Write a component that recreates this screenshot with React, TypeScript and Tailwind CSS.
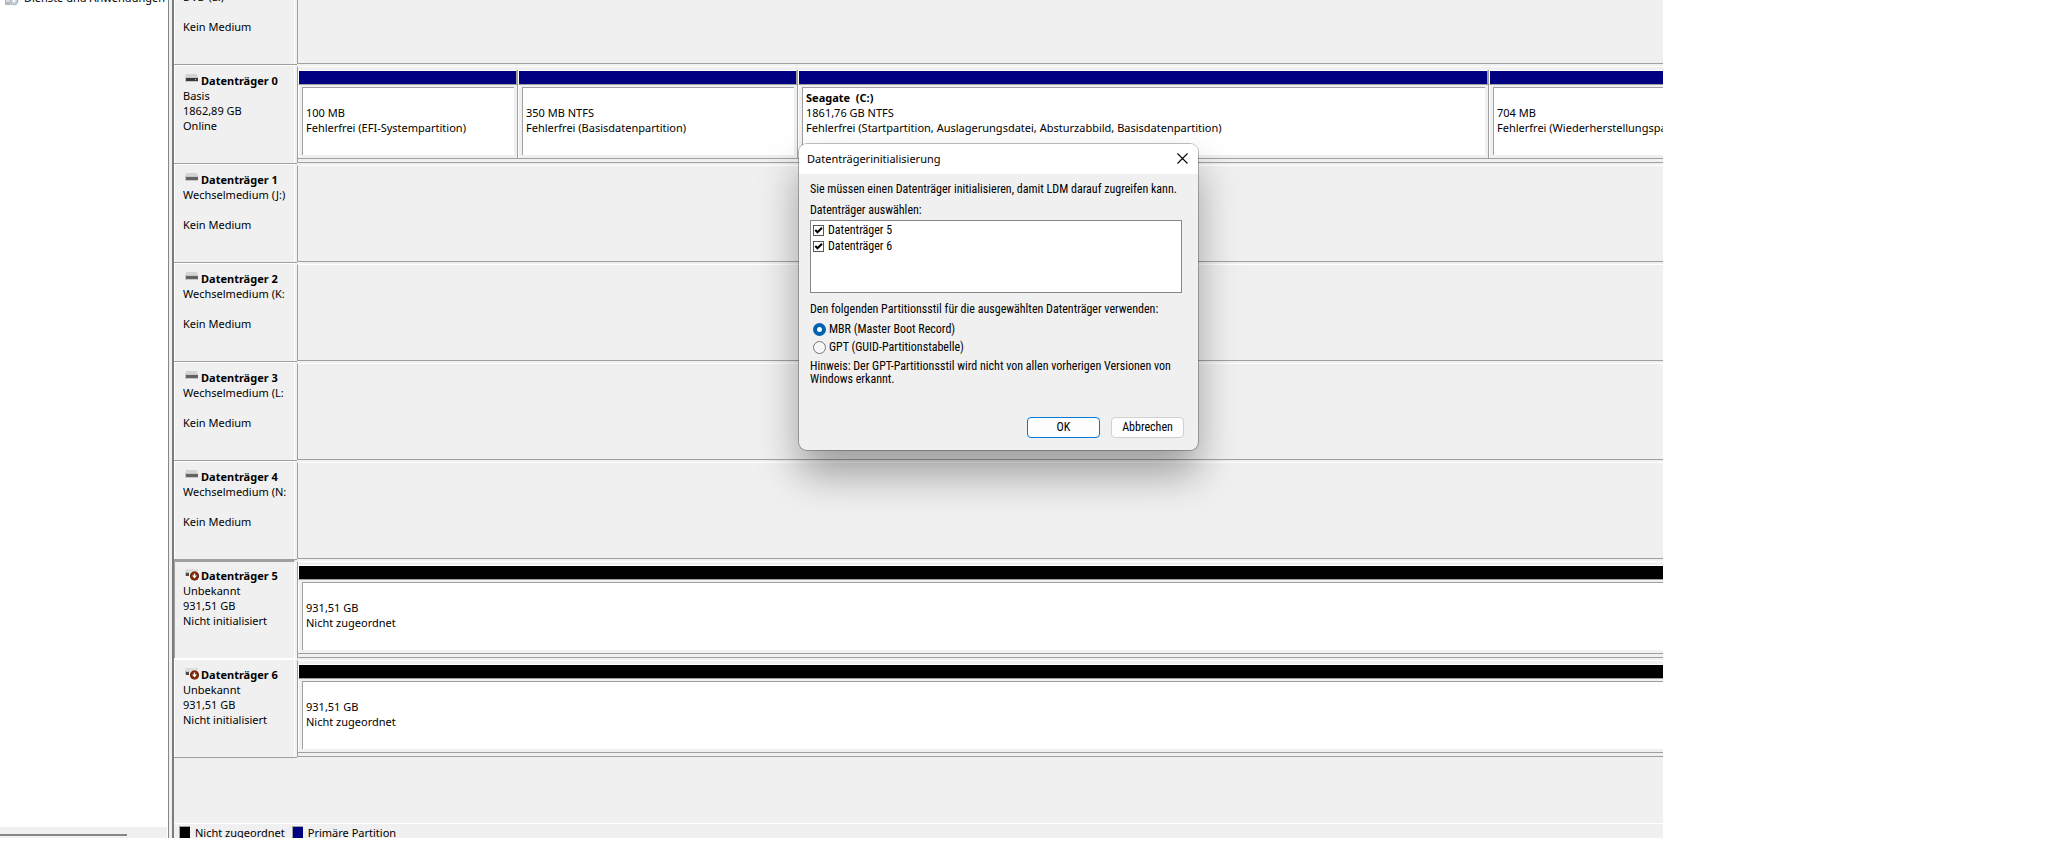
import React, { useState } from 'react';

interface Volume {
    name?: string;
    size: string;
    status: string;
    width: string;
    kind: 'primary' | 'unallocated';
}

interface Disk {
    id: string;
    title: string;
    lines: string[];
    icon: 'none' | 'basic' | 'removable' | 'unknown';
    selected?: boolean;
    volumes: Volume[];
}

// the last volume of a disk runs on past the right edge of the pane
const unallocated: Volume[] = [{ size: '931,51 GB', status: 'Nicht zugeordnet', width: 'flex-1 -mr-2', kind: 'unallocated' }];

const disks: Disk[] = [
    { id: 'dvd', title: '', lines: ['DVD (E:)', '', 'Kein Medium'], icon: 'none', volumes: [] },
    {
        id: 'd0',
        title: 'Datenträger 0',
        lines: ['Basis', '1862,89 GB', 'Online'],
        icon: 'basic',
        volumes: [
            { size: '100 MB', status: 'Fehlerfrei (EFI-Systempartition)', width: 'w-[220px] shrink-0', kind: 'primary' },
            { size: '350 MB NTFS', status: 'Fehlerfrei (Basisdatenpartition)', width: 'w-[280px] shrink-0', kind: 'primary' },
            { name: 'Seagate  (C:)', size: '1861,76 GB NTFS', status: 'Fehlerfrei (Startpartition, Auslagerungsdatei, Absturzabbild, Basisdatenpartition)', width: 'w-[691px] shrink-0', kind: 'primary' },
            { size: '704 MB', status: 'Fehlerfrei (Wiederherstellungspartition)', width: 'flex-1 -mr-2', kind: 'primary' },
        ],
    },
    { id: 'd1', title: 'Datenträger 1', lines: ['Wechselmedium (J:)', '', 'Kein Medium'], icon: 'removable', volumes: [] },
    { id: 'd2', title: 'Datenträger 2', lines: ['Wechselmedium (K:', '', 'Kein Medium'], icon: 'removable', volumes: [] },
    { id: 'd3', title: 'Datenträger 3', lines: ['Wechselmedium (L:', '', 'Kein Medium'], icon: 'removable', volumes: [] },
    { id: 'd4', title: 'Datenträger 4', lines: ['Wechselmedium (N:', '', 'Kein Medium'], icon: 'removable', volumes: [] },
    { id: 'd5', title: 'Datenträger 5', lines: ['Unbekannt', '931,51 GB', 'Nicht initialisiert'], icon: 'unknown', selected: true, volumes: unallocated },
    { id: 'd6', title: 'Datenträger 6', lines: ['Unbekannt', '931,51 GB', 'Nicht initialisiert'], icon: 'unknown', volumes: unallocated },
];

function DiskIcon({ icon }: { icon: Disk['icon'] }) {
    if (icon === 'none') return null;
    if (icon === 'unknown') {
        return (
            <svg width="16" height="15" viewBox="0 0 16 15" className="shrink-0" aria-hidden="true">
                <path d="M2 1h12v4H1V3z" fill="#dcdcdc" />
                <rect x="1" y="4" width="4" height="4" fill="#c4c4c4" />
                <rect x="2" y="5" width="3" height="3" fill="#4a4a4a" />
                <circle cx="10.5" cy="8" r="5.5" fill="#fff" />
                <circle cx="10.5" cy="8" r="4.7" fill="#7c2a0c" />
                <path d="M9.800 5.500h1.400v2h1.800L10.500 10.500 8 7.500h1.800z" fill="#fff" />
            </svg>
        );
    }
    const bar = icon === 'basic' ? '#3c3838' : '#636363';
    return (
        <svg width="16" height="15" viewBox="0 0 16 15" className="shrink-0" aria-hidden="true">
            <path d="M2 1h11l1 4H1z" fill="#d4d4d4" />
            <rect x="1" y="4" width="13" height="5" fill="#c8c8c8" />
            <rect x="2" y="5" width="12" height="3" fill={bar} />
            {icon === 'basic' && <rect x="11" y="6" width="1" height="1" fill="#b8c8b8" />}
        </svg>
    );
}

function DiskLabel({ disk }: { disk: Disk }) {
    const frame = disk.selected ? 'border-l border-r border-t-2 border-l-[#a0a0a0] border-t-[#a0a0a0] border-r-white pt-[6px]' : 'border-l border-r border-t border-white pt-[7px]';
    const bottom = disk.selected ? 'border-white' : 'border-[#a0a0a0]';
    return (
        <div className={`w-[123px] shrink-0 border-b pr-[2px] ${bottom}`}>
            <div className={`h-full pl-2 pr-1 ${frame}`}>
                <div className="flex h-[15px] items-start gap-[1px] pl-[1px] font-bold whitespace-nowrap">
                    <DiskIcon icon={disk.icon} />
                    <span>{disk.title}</span>
                </div>
                {disk.lines.map((line, i) => (
                    <div key={i} className="h-[15px] overflow-hidden whitespace-nowrap">{line}</div>
                ))}
            </div>
        </div>
    );
}

function VolumeBox({ volume }: { volume: Volume }) {
    const color = volume.kind === 'primary' ? 'bg-[#000080]' : 'bg-black';
    return (
        <div className={`flex min-w-0 flex-col border-b border-r border-b-[#a0a0a0] border-r-[#a0a0a0] ${volume.width}`}>
            <div className={`h-[15px] border border-b-[#a0a0a0] border-r-[#a0a0a0] border-l-white border-t-white ${color}`} />
            <div className="flex-1 border-l border-white px-[3px] pb-[3px] pt-[2px]">
                <div className="h-full overflow-hidden whitespace-pre border-l border-t border-[#a0a0a0] bg-white pl-[3px] pt-[2px]">
                    <div className="h-[15px] font-bold">{volume.name}</div>
                    <div className="h-[15px]">{volume.size}</div>
                    <div className="h-[15px]">{volume.status}</div>
                </div>
            </div>
        </div>
    );
}

function DiskRow({ disk }: { disk: Disk }) {
    return (
        <div className="flex h-[99px] shrink-0">
            <DiskLabel disk={disk} />
            <div className="min-w-0 flex-1 pb-[1px] pt-[1px]">
                <div className="flex h-full overflow-hidden border-b border-l border-t border-b-[#a0a0a0] border-l-[#a0a0a0] border-t-white pb-[3px] pt-[3px]">
                    {disk.volumes.map((v, i) => <VolumeBox key={i} volume={v} />)}
                </div>
            </div>
        </div>
    );
}

function LegendItem({ color, label }: { color: string, label: string }) {
    return (
        <div className="flex gap-[5px]">
            <div className={`mt-[1px] h-4 w-[11px] border-l border-t border-[#a0a0a0] ${color}`} />
            <span>{label}</span>
        </div>
    );
}

function InitDialog() {
    const [checked, setChecked] = useState<Record<string, boolean>>({ 'Datenträger 5': true, 'Datenträger 6': true });
    const [style, setStyle] = useState('mbr');

    return (
        <div
            role="dialog"
            aria-labelledby="dialog-title"
            className="absolute left-[799px] top-[144px] w-[399px] rounded-lg bg-[#f0f0f0] font-['Roboto_Condensed','Liberation_Sans',sans-serif] text-[12px] leading-[13px] shadow-[0_0_0_1px_rgba(0,0,0,0.25),0_24px_40px_rgba(0,0,0,0.35)]"
        >
            <div className="flex h-[30px] items-center justify-between rounded-t-lg bg-white pb-[1px] pl-2 pr-[10px] font-['Noto_Sans','Open_Sans',sans-serif] text-[11px]">
                <h1 id="dialog-title">Datenträgerinitialisierung</h1>
                <button type="button" aria-label="Schließen">
                    <svg width="11" height="11" viewBox="0 0 11 11" fill="none" stroke="#000" strokeWidth="1.1">
                        <path d="M.5.5l10 10M10.500.5l-10 10" />
                    </svg>
                </button>
            </div>
            <div className="pb-3 pl-[11px] pr-[14px] pt-[9px]">
                <p className="whitespace-nowrap">Sie müssen einen Datenträger initialisieren, damit LDM darauf zugreifen kann.</p>
                <p className="mt-2">Datenträger auswählen:</p>
                <div className="mr-[2px] mt-[3px] h-[73px] border border-[#828790] bg-white pl-[2px] pt-[1px]">
                    {Object.keys(checked).map(name => (
                        <label key={name} className="flex h-4 items-center gap-1">
                            <span className="relative h-[11px] w-[11px]">
                                <input
                                    type="checkbox"
                                    checked={checked[name]}
                                    onChange={e => setChecked({ ...checked, [name]: e.target.checked })}
                                    className="block h-full w-full appearance-none border border-[#555] bg-white"
                                />
                                {checked[name] && (
                                    <svg viewBox="0 0 11 11" className="pointer-events-none absolute inset-0" fill="none" stroke="#000" strokeWidth="2">
                                        <path d="M2.300 5l2.200 2.300L9 2.800" />
                                    </svg>
                                )}
                            </span>
                            {name}
                        </label>
                    ))}
                </div>
                <fieldset className="mt-[10px]">
                    <legend className="whitespace-nowrap">Den folgenden Partitionsstil für die ausgewählten Datenträger verwenden:</legend>
                    <div className="pl-[3px] pt-1">
                        {[['mbr', 'MBR (Master Boot Record)'], ['gpt', 'GPT (GUID-Partitionstabelle)']].map(([value, label]) => (
                            <label key={value} className="flex h-[18px] items-center gap-[3px]">
                                <input
                                    type="radio"
                                    name="style"
                                    checked={style === value}
                                    onChange={() => setStyle(value)}
                                    className="h-[13px] w-[13px] appearance-none rounded-full border border-[#777] bg-[#f6f6f6] checked:border-4 checked:border-[#0063b1] checked:bg-white"
                                />
                                {label}
                            </label>
                        ))}
                    </div>
                </fieldset>
                <p className="mt-1">
                    Hinweis: Der GPT-Partitionsstil wird nicht von allen vorherigen Versionen von Windows erkannt.
                </p>
                <div className="mt-[31px] flex justify-end gap-[11px]">
                    <button type="button" className="h-[21px] w-[73px] rounded border border-[#0078d4] bg-[#fdfdfd]">OK</button>
                    <button type="button" className="h-[21px] w-[73px] rounded border border-[#d0d0d0] bg-[#fdfdfd]">Abbrechen</button>
                </div>
            </div>
        </div>
    );
}

export default function App() {
    return (
        <div className="h-screen overflow-hidden bg-white pb-[26px] pr-[401px] font-['Noto_Sans','Open_Sans',sans-serif] text-[11px] leading-[15px] text-black">
            <div className="relative flex h-full">
                <div className="flex w-[168px] shrink-0 flex-col overflow-hidden bg-white pr-[1px]">
                    <div className="-mt-[10px] flex flex-1 gap-[5px] overflow-hidden whitespace-nowrap pl-[5px]">
                        <svg width="14" height="16" viewBox="0 0 14 16" className="shrink-0" aria-hidden="true">
                            <rect x="0" y="1" width="10" height="14" fill="#b4b8bc" />
                            <rect x="1" y="2" width="4" height="10" fill="#d8dadc" />
                            <circle cx="9" cy="11" r="4.500" fill="#c9d2dc" />
                            <circle cx="9" cy="11" r="3.500" fill="none" stroke="#9aa4ae" strokeDasharray="1.500 1" />
                            <circle cx="9" cy="11" r="1.300" fill="#fff" />
                        </svg>
                        <span>Dienste und Anwendungen</span>
                    </div>
                    <div className="h-[11px] bg-[#f0f0f0] pt-[7px]">
                        <div className="h-[2px] w-[127px] bg-[#868686]" />
                    </div>
                </div>
                <div className="w-[6px] shrink-0 border-l border-r-2 border-l-[#828790] border-r-[#7b7b7b] bg-[#f0f0f0]" />
                <main className="flex min-w-0 flex-1 flex-col overflow-hidden bg-[#f0f0f0]">
                    <div className="-mt-[34px] flex flex-1 flex-col">
                        {disks.map(disk => <DiskRow key={disk.id} disk={disk} />)}
                    </div>
                    <div className="flex h-[15px] gap-[7px] overflow-hidden border-t border-white pl-[5px] pt-[1px]">
                        <LegendItem color="bg-black" label="Nicht zugeordnet" />
                        <LegendItem color="bg-[#000080]" label="Primäre Partition" />
                    </div>
                </main>
                <InitDialog />
            </div>
        </div>
    );
}
